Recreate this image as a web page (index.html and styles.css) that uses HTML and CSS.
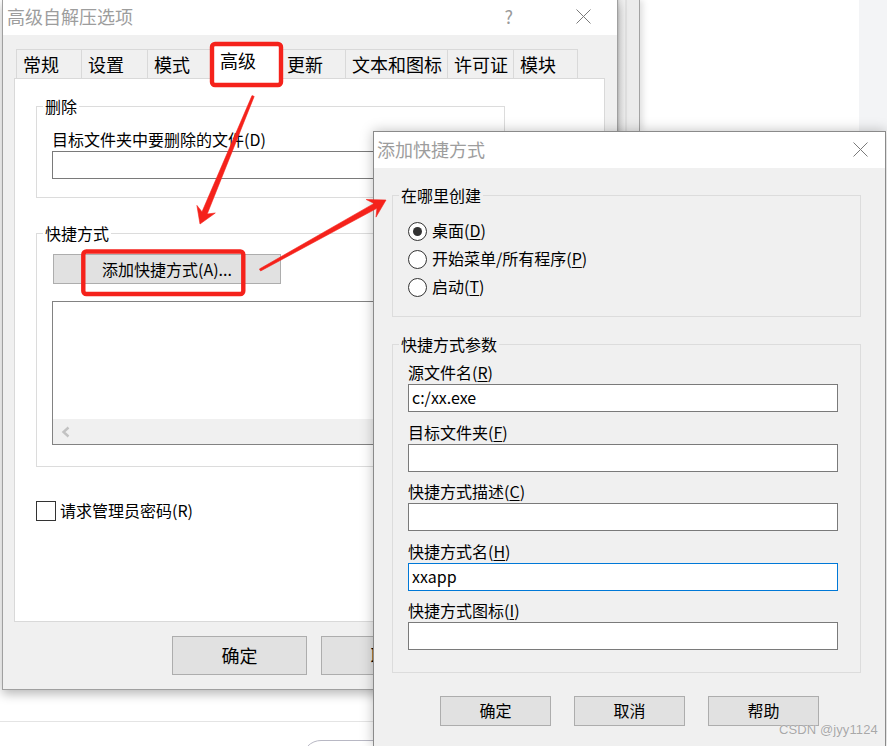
FILE: index.html
```html
<!DOCTYPE html>
<html lang="zh-CN">
<head>
<meta charset="utf-8">
<title>添加快捷方式</title>
<link rel="stylesheet" href="styles.css">
</head>
<body>
<div class="desk">
  <div class="bg-strip"></div>
  <div class="bg-side"></div>
  <div class="bg-line"></div>
  <div class="bg-pill"></div>

  <div class="win win-main">
    <div class="titlebar">
      <span class="title">高级自解压选项</span>
      <span class="help">?</span>
      <svg class="close" width="15" height="15" viewBox="0 0 15 15"><path d="M0.5 0.5L14.5 14.5M14.5 0.5L0.5 14.5"/></svg>
    </div>
    <div class="tabs">
      <div class="tab tab-65">常规</div>
      <div class="tab tab-66">设置</div>
      <div class="tab tab-65">模式</div>
      <div class="tab tab-sel">高级</div>
      <div class="tab tab-65">更新</div>
      <div class="tab tab-102">文本和图标</div>
      <div class="tab tab-66">许可证</div>
      <div class="tab tab-65 tab-last">模块</div>
    </div>
    <div class="panel">
      <fieldset class="group g-del">
        <legend>删除</legend>
        <div class="lbl lbl-del">目标文件夹中要删除的文件(D)</div>
        <div class="edit edit-wide"></div>
      </fieldset>
      <fieldset class="group g-short">
        <legend>快捷方式</legend>
        <div class="btn btn-add">添加快捷方式(A)...</div>
        <div class="listbox">
          <div class="list-area"></div>
          <div class="hscroll">
            <svg class="chev" width="10" height="12" viewBox="0 0 10 12"><path d="M7.5 1.5L2.5 6L7.5 10.5"/></svg>
          </div>
        </div>
      </fieldset>
      <div class="check-row">
        <span class="checkbox"></span>
        <span class="check-label">请求管理员密码(R)</span>
      </div>
    </div>
    <div class="main-buttons">
      <div class="btn btn-big">确定</div>
      <div class="btn btn-big">取消</div>
      <div class="btn btn-big">帮助</div>
    </div>
  </div>

  <div class="win win-add">
    <div class="titlebar">
      <span class="title">添加快捷方式</span>
      <svg class="close" width="15" height="15" viewBox="0 0 15 15"><path d="M0.5 0.5L14.5 14.5M14.5 0.5L0.5 14.5"/></svg>
    </div>
    <div class="add-body">
      <fieldset class="group g-where">
        <legend>在哪里创建</legend>
        <div class="radio-row"><span class="radio on"></span><span class="radio-label">桌面(<u>D</u>)</span></div>
        <div class="radio-row"><span class="radio"></span><span class="radio-label">开始菜单/所有程序(<u>P</u>)</span></div>
        <div class="radio-row"><span class="radio"></span><span class="radio-label">启动(<u>T</u>)</span></div>
      </fieldset>
      <fieldset class="group g-params">
        <legend>快捷方式参数</legend>
        <div class="lbl lbl-first">源文件名(<u>R</u>)</div>
        <div class="edit edit-param">c:/xx.exe</div>
        <div class="lbl">目标文件夹(<u>F</u>)</div>
        <div class="edit edit-param"></div>
        <div class="lbl">快捷方式描述(<u>C</u>)</div>
        <div class="edit edit-param"></div>
        <div class="lbl">快捷方式名(<u>H</u>)</div>
        <div class="edit edit-param focus">xxapp</div>
        <div class="lbl">快捷方式图标(<u>I</u>)</div>
        <div class="edit edit-param"></div>
      </fieldset>
      <div class="add-buttons">
        <div class="btn btn-small">确定</div>
        <div class="btn btn-small">取消</div>
        <div class="btn btn-small">帮助</div>
      </div>
    </div>
  </div>

  <svg class="annot" width="887" height="746" viewBox="0 0 887 746">
    <rect class="mark" x="212" y="44" width="69" height="41" rx="3"/>
    <rect class="mark" x="83.3" y="251.5" width="160" height="42.5" rx="3"/>
    <polygon class="arrow" points="254.2,96.4 207.2,214.0 215.3,213.0 200,224 196.9,205.4 202.0,211.8 252.0,95.6"/>
    <polygon class="arrow" points="260.6,271.0 376.9,208.3 376.0,217.1 386,200 366.2,199.5 374.1,203.4 259.4,269.0"/>
  </svg>

  <div class="watermark">CSDN @jyy1124</div>
</div>
</body>
</html>
```

FILE: styles.css
```css
* { box-sizing: border-box; }
html, body { margin: 0; padding: 0; }
body {
  width: 887px;
  height: 746px;
  overflow: hidden;
  background: #fff;
  font-family: "Noto Sans CJK SC", "Noto Sans", sans-serif;
  font-size: 16px;
  color: #000;
}
.desk { position: relative; width: 887px; height: 746px; overflow: hidden; background: #fff; }

/* background desktop pieces */
.bg-strip {
  position: absolute; left: 617px; top: 0; width: 23px; height: 131px;
  background: linear-gradient(to right, #c9c9c9 0, #e8e8e8 3px, #f0f0f0 8px, #d4d4d4 9px, #ececec 10px, #ececec 100%);
  border-right: 1px solid #a3a3a3;
  box-shadow: 3px 0 6px rgba(0,0,0,.12);
}
.bg-side { position: absolute; left: 859px; top: 0; width: 28px; height: 131px; background: #f3f4f6; }
.bg-line { position: absolute; left: 0; top: 721px; width: 373px; height: 1px; background: #e4e4e4; }
.bg-pill { position: absolute; left: 302px; top: 740px; width: 200px; height: 40px; border: 1px solid #b8b8c4; border-radius: 19px; }

/* windows */
.win { position: absolute; background: #f0f0f0; }
.win-main {
  left: 2px; top: 0; width: 616px; height: 690px;
  border: 1px solid #a0a0a0; border-top: 0;
  box-shadow: 0 4px 10px rgba(0,0,0,.28);
}
.win-add {
  left: 373px; top: 131px; width: 513px; height: 616px;
  border: 1px solid #8a8a8a;
  box-shadow: 0 0 12px rgba(0,0,0,.25);
}
.titlebar { display: flex; align-items: center; background: #fff; }
.win-main .titlebar { height: 35px; padding-left: 4px; padding-bottom: 3px; }
.win-add .titlebar { height: 36px; padding-left: 3px; padding-bottom: 2px; }
.title { flex: 1; font-size: 18px; line-height: 24px; color: #9d9d9d; white-space: nowrap; }
.help { font-size: 18px; line-height: 24px; color: #9a9a9a; margin-right: 63px; }
.close { display: block; fill: none; stroke: #7a7a7a; stroke-width: 1; }
.win-main .close { margin-right: 26px; }
.win-add .close { margin-right: 17px; }

/* tabs */
.tabs { display: flex; align-items: flex-end; height: 43px; padding-left: 13px; }
.tab {
  height: 29px;
  border-left: 1px solid #d9d9d9; border-top: 1px solid #d9d9d9;
  background: #f0f0f0;
  padding-left: 6px;
  font-size: 18px; line-height: 28px;
  white-space: nowrap; overflow: hidden;
}
.tab-65 { width: 65px; }
.tab-66 { width: 66px; }
.tab-102 { width: 102px; }
.tab-last { border-right: 1px solid #d9d9d9; }
.tab-sel {
  width: 72px; height: 35px; margin: 0 -2px -1px -2px;
  position: relative; z-index: 2;
  background: #fff;
  border-right: 1px solid #d9d9d9;
  padding-left: 9px;
  line-height: 31px;
}

/* panel */
.panel {
  margin-left: 11px; width: 591px; height: 544px;
  background: #fff; border: 1px solid #d9d9d9;
  padding-top: 16px; padding-left: 21px;
}
.group {
  margin: 0; padding: 0 0 18px 0; min-width: 0;
  width: 469px;
  border: 1px solid #dcdcdc;
}
.group legend { padding: 0 2px; margin-left: 6px; font-size: 16px; line-height: 22px; }
.g-short { margin-top: 24px; padding-bottom: 21px; }
.lbl { font-size: 16px; line-height: 20px; padding-bottom: 2px; margin-left: 15px; white-space: nowrap; }
.lbl-del { margin-top: 12px; }
.edit { background: #fff; border: 1px solid #7a7a7a; height: 28px; margin-left: 15px; font-size: 16px; line-height: 25px; padding-left: 3px; }
.edit-wide { width: 437px; }

.btn {
  display: flex; align-items: center; justify-content: center;
  background: #e1e1e1; border: 1px solid #adadad;
  white-space: nowrap;
}
.btn-add { width: 228px; height: 30px; margin: 10px 0 0 16px; font-size: 16px; }

.listbox { margin: 17px 0 0 15px; width: 437px; height: 144px; border: 1px solid #828282; background: #fff; display: flex; flex-direction: column; }
.list-area { flex: 1; }
.hscroll { height: 25px; background: #f0f0f0; display: flex; align-items: center; padding-left: 8px; }
.chev { display: block; fill: none; stroke: #c2c2c2; stroke-width: 2.4; }

.check-row { display: flex; align-items: center; margin-top: 33px; }
.checkbox { width: 20px; height: 20px; border: 1px solid #333; background: #fff; }
.check-label { margin-left: 4px; line-height: 20px; padding-bottom: 2px; }

.main-buttons { display: flex; gap: 14px; margin-top: 14px; padding-left: 169px; }
.btn-big { width: 135px; height: 39px; font-size: 18px; padding-bottom: 1px; }

/* add dialog */
.add-body { padding: 16px 0 0 18px; }
.radio-row { display: flex; align-items: center; height: 28px; margin-left: 15px; }
.radio-row:first-of-type { margin-top: 11px; }
.g-where { padding-bottom: 15px; }
.radio {
  width: 19px; height: 19px; border: 1px solid #333; border-radius: 50%; background: #fff;
  display: flex; align-items: center; justify-content: center;
}
.radio.on::after { content: ""; width: 9px; height: 9px; border-radius: 50%; background: #333; }
.radio-label { margin-left: 5px; line-height: 20px; padding-bottom: 2px; white-space: nowrap; }
u { text-underline-offset: 2px; }

.g-params { margin-top: 16px; padding-bottom: 21.5px; }
.g-params .lbl { margin-top: 9.5px; }
.g-params .lbl-first { margin-top: 7px; }
.edit-param { width: 430px; }
.edit.focus { border-color: #0078d7; }

.add-buttons { display: flex; gap: 23px; margin-top: 23px; padding-left: 48px; }
.btn-small { width: 111px; height: 30px; font-size: 16px; padding-bottom: 1px; }

/* annotations */
.annot { position: absolute; left: 0; top: 0; z-index: 10; pointer-events: none; }
.mark { fill: none; stroke: #f5221b; stroke-width: 4.4; }
.arrow { fill: #f5221b; stroke: #f5221b; stroke-width: 0.6; stroke-linejoin: round; }

.watermark {
  position: absolute; left: 779px; top: 721px; z-index: 11;
  font-family: "Liberation Sans", "DejaVu Sans", sans-serif;
  font-size: 13px; line-height: 18px; color: #a8a8a8; letter-spacing: 0.1px;
  text-shadow: 0 0 1px #fff;
}
```
